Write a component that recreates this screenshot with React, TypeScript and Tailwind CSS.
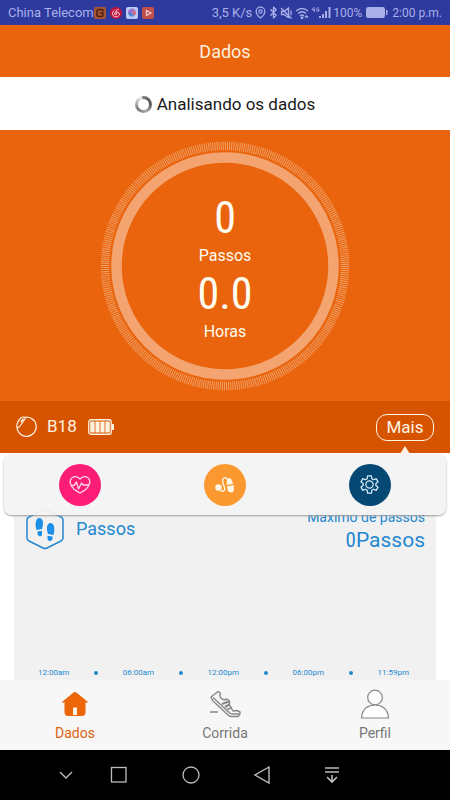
import React from "react";
import { Bluetooth, MapPin } from "lucide-react";

const times = ["12:00am", "06:00am", "12:00pm", "06:00pm", "11:59pm"];
const condensed = "font-['Roboto_Condensed','Liberation_Sans_Narrow','Roboto',sans-serif]";

function StatusBar() {
  return (
    <header className="flex h-[25px] items-center justify-between bg-[#2f3a9f] px-2 text-[13px] leading-4 text-[#a9b0e8]">
      <div className="flex items-center">
        <span>China Telecom</span>
        <svg className="h-3 w-[60px]" viewBox="0 0 60 12" aria-hidden="true">
          <rect width="12" height="12" rx="2" fill="#a5552f" />
          <path d="M9 4.500V4Q9 2.500 7.500 2.500H5Q3 2.500 3 4.500V7.500Q3 9.500 5 9.500H7.500Q9 9.500 9 8V6H6" fill="none" stroke="#4a2018" strokeWidth="1.500" />
          <circle cx="22" cy="6" r="6" fill="#c4153a" />
          <path d="M24.500 2.500Q21.500 2.500 22 5L22.500 7.500Q21 8.500 20.500 7Q20.500 5 23 5Q26 5.500 25.500 8Q24 10.500 21 9.800Q18 9 18.500 6Q19 4 20.500 3.500" fill="none" stroke="#f0c5d8" strokeWidth="1" />
          <rect x="32" width="12" height="12" rx="2" fill="#bcc9f2" />
          <path d="M34 6A4 4 0 0 1 41 3L38 6Z" fill="#9a70ca" />
          <path d="M41 3A4 4 0 0 1 40 9L38 6Z" fill="#d1687c" />
          <path d="M40 9A4 4 0 0 1 34 6H38Z" fill="#4c83d4" />
          <rect x="48" width="12" height="12" rx="2" fill="#c04f49" />
          <path d="M52.500 3.500L57 6L52.500 8.500Z" fill="none" stroke="#f1c8d2" strokeWidth="1.300" />
        </svg>
      </div>
      <div className="flex items-center">
        <span className="mr-[2px]">3,5 K/s</span>
        <MapPin size={13} strokeWidth={2.2} />
        <Bluetooth size={13} strokeWidth={2.4} />
        <svg className="h-3 w-[13px]" viewBox="0 0 13 12" fill="none" stroke="currentColor" strokeWidth="1.300" aria-hidden="true">
          <path d="M1.500 4.500H4L8.500 1V10.500L4 7.500H1.500ZM1 1L11.500 11.500M10.500 3.500Q12 6 10.500 8" />
        </svg>
        <svg className="mx-[2px] h-3 w-[14px]" viewBox="0 0 14 12" fill="none" stroke="currentColor" strokeWidth="1.400" aria-hidden="true">
          <path d="M1 4Q7-1 13 4M3 6.500Q7 3 11 6.500M5 9Q7 7 9 9" />
          <circle cx="7" cy="11" r=".7" fill="currentColor" />
          <path d="M10 10.500L11.500 9L13 10.500" />
        </svg>
        <svg className="mr-[2px] h-[13px] w-5" viewBox="0 0 20 13" aria-hidden="true">
          <path d="M3 1L1 4H4M3.500 2.500V6M8 2Q5.500 1 5.500 3.500T8 5V3.500H7" fill="none" stroke="currentColor" strokeWidth=".9" />
          <path d="M8 10h2v2H8zM11 8h2v4h-2zM14 5h2v7h-2zM17.500 1h2v11h-2z" fill="currentColor" />
        </svg>
        <span className="text-xs">100%</span>
        <svg className="mx-1 h-[11px] w-[22px]" viewBox="0 0 22 11" aria-hidden="true">
          <rect x=".5" y=".5" width="18" height="10" rx="1" fill="none" stroke="currentColor" />
          <path d="M1 1h17v9H1zM20 3h1.500v5H20z" fill="currentColor" />
        </svg>
        <span className="text-xs">2:00 p.m.</span>
      </div>
    </header>
  );
}

function Gauge() {
  return (
    <section className="grid h-[271px] place-items-center bg-[#e9640c] text-[#fffdf0]">
      <svg className="col-start-1 row-start-1 size-[250px]" viewBox="0 0 250 250" fill="none" aria-hidden="true">
        <circle cx="125" cy="125" r="108.500" stroke="#f3a470" strokeWidth="10.500" />
        <circle cx="125" cy="125" r="120" stroke="#f0a168" strokeWidth="8.500" pathLength="720" strokeDasharray="0.900 1.100" />
      </svg>
      <div className="col-start-1 row-start-1 flex flex-col items-center pt-1 text-base">
        <span className={`${condensed} text-[44px] leading-[52px]`}>0</span>
        <span className="leading-6">Passos</span>
        <span className={`${condensed} text-[44px] leading-[52px]`}>0.0</span>
        <span className="leading-6">Horas</span>
      </div>
    </section>
  );
}

function DeviceBar() {
  return (
    <section className="flex h-[52px] items-center bg-[#d65300] px-4 text-[17px] text-[#fff3e2]">
      <svg className="h-[22px] w-[21px]" viewBox="0 0 21 22" fill="none" stroke="currentColor" strokeWidth="1.200" aria-hidden="true">
        <path d="M8 1.500A9.600 9.600 0 1 1 1 11" />
        <path d="M1 11C0 8 4 1 7 1Q10 1 9 3L4 10Q2.500 12 1 11Z" />
        <path d="M7.500 2.800L5 6" strokeWidth="1.600" />
      </svg>
      <span className="ml-[10px]">B18</span>
      <svg className="ml-[11px] h-4 w-[26px]" viewBox="0 0 26 16" aria-hidden="true">
        <rect x=".75" y=".75" width="22.500" height="14.500" rx="2" fill="none" stroke="currentColor" strokeWidth="1.300" />
        <path d="M2.200 2.500h4.400v11H2.200zM7.400 2.500h4.200v11H7.400zM12.400 2.500h4.200v11h-4.200zM17.400 2.500h4.400v11h-4.400zM24 5h2v6h-2z" fill="currentColor" />
      </svg>
      <button className="ml-auto h-[27px] w-[58px] rounded-[11px] border border-[#fff3e2] leading-6">Mais</button>
    </section>
  );
}

function Popup() {
  return (
    <div className="absolute inset-x-1 top-px z-10 grid h-[61px] grid-cols-3 items-center rounded-lg bg-[#f3f3f3]/95 px-1 shadow-[0_1px_2px_#999999]">
      <svg className="absolute right-9 -top-2 h-2 w-[10px]" viewBox="0 0 10 8" aria-hidden="true"><path d="M5 0L10 8H0Z" fill="#fff0e6" /></svg>
      <button aria-label="Frequência cardíaca" className="grid size-[42px] place-items-center justify-self-center rounded-full bg-[#fe1d76] text-[#ffd7e7]">
        <svg className="h-[18px] w-[22px]" viewBox="0 0 22 18" fill="none" stroke="currentColor" strokeWidth="1.300" strokeLinejoin="round" aria-hidden="true">
          <path d="M2 9C-1 2 6-2 11 3C16-2 23 2 20 9C19 12 15 15 11 17C7 15 3 12 2 9Z" />
          <path d="M2 9.500H5L7.500 6L9.500 13L12.500 7L14 9H20" />
        </svg>
      </button>
      <button aria-label="Pressão arterial" className="grid size-[42px] place-items-center justify-self-center rounded-full bg-[#fb982f] text-[#fff6e5]">
        <svg className="h-5 w-[22px]" viewBox="0 0 22 20" aria-hidden="true">
          <circle cx="4.500" cy="12.500" r="3.300" fill="currentColor" />
          <path d="M6 14.500C8 17.500 11.500 16.500 10.500 12.500C9.500 9 7.500 6.500 9 4C10.500 2 13 2.500 13.500 5" fill="none" stroke="currentColor" strokeWidth="1.300" />
          <path d="M12.500 10L13 5Q13.500 2.500 15.500 3Q18 4 19 9Z" fill="currentColor" />
          <path d="M13 11.300L19.800 10.300L20 14.500Q19.500 17.800 16.800 17.500Q14 17.300 13.500 15Z" fill="currentColor" />
        </svg>
      </button>
      <button aria-label="Configurações" className="grid size-[42px] place-items-center justify-self-center rounded-full bg-[#044873] text-[#dbedf9]">
        <svg className="size-[19px]" viewBox="0 0 20 20" fill="none" stroke="currentColor" strokeWidth="1.300" strokeLinejoin="round" aria-hidden="true">
          <path d="M8 1H12L12.500 4L14.200 5L17 3.800L19 7.200L16.700 9V11L19 12.800L17 16.200L14.200 15L12.500 16L12 19H8L7.500 16L5.800 15L3 16.200L1 12.800L3.300 11V9L1 7.200L3 3.800L5.800 5L7.500 4Z" />
          <circle cx="10" cy="10" r="3.800" />
        </svg>
      </button>
    </div>
  );
}

function StepsCard() {
  return (
    <section className="relative h-[227px] bg-white pt-[43px]">
      <Popup />
      <div className="mx-[14px] flex h-full flex-col bg-[#f1f1f1] text-[#2388d0]">
        <div className="flex items-start justify-between pt-3 pr-[11px] pl-3">
          <div className="flex items-center gap-3 text-lg">
            <svg className="h-[42px] w-[38px]" viewBox="0 0 38 42" aria-hidden="true">
              <path d="M17 2Q19 1 21 2L35 9Q37 10 37 12V30Q37 32 35 33L21 40Q19 41 17 40L3 33Q1 32 1 30V12Q1 10 3 9Z" fill="none" stroke="currentColor" strokeWidth="1.500" />
              <g fill="#1c90e6">
                <path d="M10 20C9 15 10 10 13.500 10C17 10 18 15 16 21L10.500 22ZM11.500 23.500L16 22.800V27Q15 29 13 28T11.500 23.500Z" />
                <path d="M28 25C29 20 28 15 24.500 15C21 15 20 20 22 26L27.500 27ZM26.500 28.500L21.500 27.800V31Q22 33.500 24.500 33T26.500 28.500Z" />
              </g>
            </svg>
            <h2>Passos</h2>
          </div>
          <div className="flex flex-col items-end">
            <span className="text-sm leading-[18px]">Máximo de passos</span>
            <span className="text-[21px] leading-7"><span className={condensed}>0</span>Passos</span>
          </div>
        </div>
        <div className="mt-auto flex items-center justify-between pr-[27px] pb-px pl-6 text-[8px] leading-3">
          {times.map((time, i) => (
            <React.Fragment key={time}>
              {i > 0 && <span className="size-1 rounded-full bg-current" />}
              <span>{time}</span>
            </React.Fragment>
          ))}
        </div>
      </div>
    </section>
  );
}

function Tabs() {
  return (
    <nav className="grid h-[70px] grid-cols-3 bg-[#f7f7f7] text-sm leading-5 text-[#777777]">
      <a href="#dados" className="flex flex-col items-center gap-[3px] pt-[9px] text-[#dc6411]">
        <svg className="h-[31px] w-7" viewBox="0 0 28 31" aria-hidden="true">
          <path d="M14 3Q15 3 16 4L27 13L26 14L24.500 13V23Q24.500 27 21 27H7Q3.500 27 3.500 23V13L2 14L1 13L12 4Q13 3 14 3Z" fill="#ed6509" />
          <path d="M12 18.500H16V26H12Z" fill="#fff2e5" />
        </svg>
        Dados
      </a>
      <a href="#corrida" className="flex flex-col items-center gap-[3px] pt-[9px]">
        <svg className="h-[31px] w-8" viewBox="0 0 32 31" fill="none" stroke="#888" strokeWidth="1.400" strokeLinejoin="round" aria-hidden="true">
          <path d="M9 2.500L2 8L3.500 11.500L18 25Q20 27.500 23 27.500H29L31 25V23L28 21.500L24 22L20.500 16V12L18 10Q14 12 12 9Q10 7 11.500 4Z" />
          <path d="M4 8.500L18.500 22Q21 25 24 25H30.500M1 23H9" />
          <path d="M13 15L20 12.500M16 18L20.500 15.500" strokeWidth="2.200" />
          <path d="M18 20.500L23 18.500" />
        </svg>
        Corrida
      </a>
      <a href="#perfil" className="flex flex-col items-center gap-[3px] pt-[9px]">
        <svg className="h-[31px] w-[30px]" viewBox="0 0 30 31" fill="white" stroke="#888" strokeWidth="1.200" aria-hidden="true">
          <circle cx="15" cy="8.500" r="7.300" /><path d="M1.500 29C2 19 9 16 15 16S28 19 28.500 29Z" />
        </svg>
        Perfil
      </a>
    </nav>
  );
}

function SystemNav() {
  return (
    <nav className="flex h-[50px] items-center gap-9 bg-black pr-[110px] pl-[58px] text-[#bdbdbd]">
      <button aria-label="Ocultar"><svg className="size-4" viewBox="0 0 16 16" fill="none" stroke="currentColor" strokeWidth="1.400"><path d="M2 5L8 11L14 5" /></svg></button>
      <div className="flex flex-1 items-center justify-between">
        <button aria-label="Recentes"><svg className="size-[18px]" viewBox="0 0 18 18" fill="none" stroke="currentColor" strokeWidth="1.300"><rect x="1.500" y="1.500" width="14.500" height="14.500" /></svg></button>
        <button aria-label="Início"><svg className="size-[18px]" viewBox="0 0 18 18" fill="none" stroke="currentColor" strokeWidth="1.300"><circle cx="9" cy="9" r="8" /></svg></button>
        <button aria-label="Voltar"><svg className="h-[18px] w-4" viewBox="0 0 16 18" fill="none" stroke="currentColor" strokeWidth="1.400"><path d="M15 1L1 9L15 17Z" /></svg></button>
        <button aria-label="Notificações"><svg className="h-[18px] w-4" viewBox="0 0 16 18" fill="none" stroke="currentColor" strokeWidth="1.600"><path d="M1 2H15M1 6H15M8 9V16M3 11L8 16L13 11" /></svg></button>
      </div>
    </nav>
  );
}

export default function App() {
  return (
    <div className="w-full overflow-hidden bg-white font-['Roboto',sans-serif]">
      <StatusBar />
      <main>
        <h1 className="flex h-[52px] items-center justify-center bg-[#e9640c] pt-px text-lg text-[#fff0dd]">Dados</h1>
        <div className="flex h-[53px] items-center justify-center gap-[5px] bg-white pt-[2px] text-[17px] text-[#1a1a1a]">
          <span className="size-[17px] rounded-full bg-[conic-gradient(#777_0deg,#555_80deg,#aaa_160deg,#777_230deg,#eee_340deg,#777_360deg)] p-[3px]"><span className="block size-full rounded-full bg-white" /></span>
          <span>Analisando os dados</span>
        </div>
        <Gauge />
        <DeviceBar />
        <StepsCard />
      </main>
      <Tabs />
      <SystemNav />
    </div>
  );
}
